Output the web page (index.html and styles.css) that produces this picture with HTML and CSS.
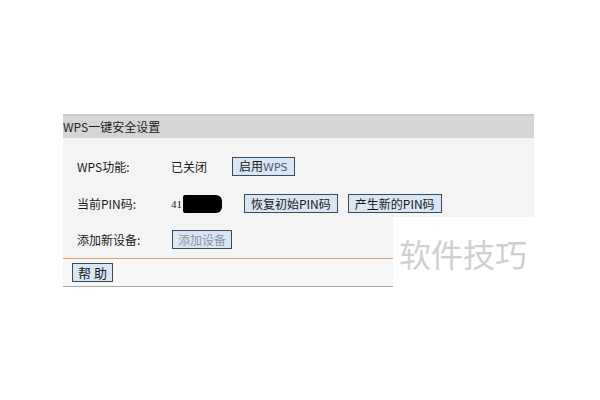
FILE: index.html
```html
<!DOCTYPE html>
<html lang="zh-CN">
<head>
    <meta charset="UTF-8">
    <title>WPS一键安全设置</title>
    <link rel="stylesheet" href="styles.css">
</head>
<body>
    <div class="panel">
        <div class="title"><span>WPS一键安全设置</span></div>

        <div class="rows">
            <div class="row row-first">
                <span class="label">WPS功能:</span>
                <span class="value">已关闭</span>
                <button class="btn">启用<span class="latin">WPS</span></button>
            </div>
            <div class="row">
                <span class="label">当前PIN码:</span>
                <span class="value pin">41<span class="mask"></span></span>
                <button class="btn">恢复初始PIN码</button>
                <button class="btn">产生新的PIN码</button>
            </div>
        </div>

        <div class="lower">
            <div class="lower-left">
                <div class="row row-add">
                    <span class="label">添加新设备:</span>
                    <button class="btn btn-off">添加设备</button>
                </div>
                <div class="help-bar">
                    <button class="btn btn-help">帮 助</button>
                </div>
            </div>
            <div class="watermark">软件技巧</div>
        </div>
    </div>
</body>
</html>
```

FILE: styles.css
```css
body {
    margin: 0;
    background: #ffffff;
    font-family: "Noto Sans CJK SC", "DejaVu Sans", sans-serif;
    font-size: 12px;
    color: #1a1a1a;
}

.panel {
    margin: 114px 0 0 63px;
    width: 471px;
}

.title {
    height: 22px;
    line-height: 22px;
    background: #d5d5d5;
    border-top: 2px solid #c9c9c9;
    white-space: nowrap;
    font-size: 12px;
    color: #222;
}

.rows {
    background: #f4f4f4;
    height: 79px;
    padding-top: 19px;
    box-sizing: border-box;
}

.row {
    display: flex;
    align-items: center;
    height: 19px;
    padding-left: 14px;
}

.row-first {
    margin-bottom: 18px;
}

.label {
    width: 94px;
    flex-shrink: 0;
}

.value {
    width: 61px;
    flex-shrink: 0;
}

.pin {
    display: flex;
    align-items: center;
    font-family: "Liberation Serif", serif;
    font-size: 11px;
    width: 73px;
}

.mask {
    display: inline-block;
    width: 39px;
    height: 18px;
    margin-left: 1px;
    background: #000;
    border-radius: 2px 6px 6px 2px;
}

.btn {
    font-family: inherit;
    font-size: 12px;
    color: #1a1a1a;
    background: #d9e6f4;
    border: 1px solid #3b4a5a;
    height: 19px;
    padding: 0 6px;
    line-height: 16px;
    margin-right: 10px;
}

.latin {
    color: #4a5a70;
    font-family: "DejaVu Sans", sans-serif;
    font-size: 11px;
}

.lower {
    display: flex;
}

.lower-left {
    width: 330px;
    flex-shrink: 0;
    background: #f4f4f4;
}

.row-add {
    height: 41px;
    padding-top: 4px;
    box-sizing: border-box;
}

.row-add .label {
    width: 95px;
}

.btn-off {
    color: #8a96a4;
    padding: 0 5px;
}

.help-bar {
    border-top: 1px solid #d9a67a;
    border-bottom: 1px solid #a8a8a8;
    height: 27px;
    display: flex;
    align-items: center;
    padding-left: 9px;
    background: #f7f7f7;
}

.btn-help {
    padding: 0 5px;
    font-size: 13px;
}

.watermark {
    flex: 1;
    background: #ffffff;
    color: #cfcfcf;
    font-size: 32px;
    white-space: nowrap;
    padding: 13px 0 0 6px;
    height: 57px;
}
```
